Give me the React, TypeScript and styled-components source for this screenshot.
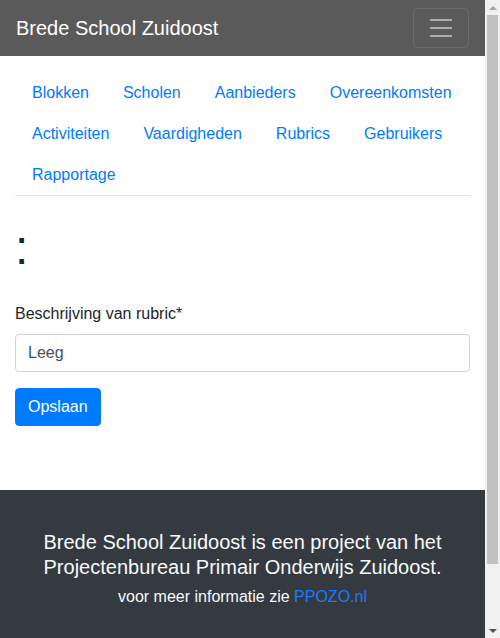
import React, { useState } from 'react';
import styled, { createGlobalStyle } from 'styled-components';

const GlobalStyle = createGlobalStyle`
  * { box-sizing: border-box; }
  html, body {
    margin: 0;
    padding: 0;
  }
  body {
    font-family: "Liberation Sans", Arial, sans-serif;
    font-size: 16px;
    line-height: 1.5;
    color: #212529;
    background: #fff;
  }
`;

// page content leaves room for the window scrollbar on the right
const Page = styled.div`
  margin-right: 15px;
`;

// drawn scrollbar, lies over the right edge of the window
const ScrollRail = styled.div`
  position: fixed;
  top: 0;
  right: 0;
  width: 15px;
  height: 100vh;
  background: #f1f1f1;
  display: flex;
  flex-direction: column;
  align-items: center;
`;

const ScrollArrow = styled.div<{ $down?: boolean; $muted?: boolean }>`
  width: 15px;
  height: 15px;
  display: flex;
  align-items: center;
  justify-content: center;

  &::before {
    content: '';
    border-left: 4px solid transparent;
    border-right: 4px solid transparent;
    ${({ $down, $muted }) =>
      $down
        ? `border-top: 4px solid ${$muted ? '#a3a3a3' : '#505050'};`
        : `border-bottom: 4px solid ${$muted ? '#a3a3a3' : '#505050'};`}
  }
`;

const ScrollTrack = styled.div`
  flex: 1;
  width: 100%;
  padding: 0 2px;
`;

const ScrollThumb = styled.div`
  height: 549px;
  background: #c1c1c1;
`;

const Navbar = styled.nav`
  height: 56px;
  background: #5a5a5a;
  padding: 8px 16px;
  display: flex;
  align-items: center;
  justify-content: space-between;
`;

const Brand = styled.a`
  color: #fff;
  font-size: 20px;
  line-height: 30px;
  text-decoration: none;
`;

const Toggler = styled.button`
  width: 56px;
  height: 40px;
  padding: 4px 12px;
  background: transparent;
  border: 1px solid rgba(255, 255, 255, 0.1);
  border-radius: 4px;
  display: flex;
  align-items: center;
  justify-content: center;
  cursor: pointer;
`;

const Container = styled.main`
  padding: 16px 15px 0;
`;

const Tabs = styled.ul`
  list-style: none;
  margin: 0;
  padding: 0;
  display: flex;
  flex-wrap: wrap;
  border-bottom: 1px solid #dee2e6;
`;

const TabItem = styled.li`
  margin-bottom: -1px;
`;

const TabLink = styled.a`
  display: block;
  padding: 8px 16px;
  border: 1px solid transparent;
  color: #007bff;
  text-decoration: none;
  line-height: 24px;
`;

const Title = styled.h1`
  font-size: 48px;
  font-weight: 500;
  line-height: 1.2;
  margin: 23px 0 25px;
`;

const FormGroup = styled.div`
  margin-bottom: 16px;
`;

const Label = styled.label`
  display: block;
  margin-bottom: 8px;
`;

const TextInput = styled.input`
  display: block;
  width: 100%;
  height: 38px;
  padding: 6px 12px;
  font-family: inherit;
  font-size: 16px;
  line-height: 24px;
  color: #495057;
  border: 1px solid #ced4da;
  border-radius: 4px;
  outline: none;
`;

const SaveButton = styled.button`
  height: 38px;
  padding: 6px 12px;
  font-family: inherit;
  font-size: 16px;
  line-height: 24px;
  color: #fff;
  background: #007bff;
  border: 1px solid #007bff;
  border-radius: 4px;
  margin-bottom: 64px;
  cursor: pointer;
`;

const Footer = styled.footer`
  background: #343a40;
  color: #f8f9fa;
  text-align: center;
  padding: 40px 15px 97px;
`;

const FooterLead = styled.p`
  font-size: 20px;
  line-height: 25px;
  margin: 0 0 5px;
`;

const FooterNote = styled.p`
  margin: 0;
  line-height: 24px;

  a {
    color: #1a7cf5;
    text-decoration: none;
  }
`;

const links = [
  'Blokken',
  'Scholen',
  'Aanbieders',
  'Overeenkomsten',
  'Activiteiten',
  'Vaardigheden',
  'Rubrics',
  'Gebruikers',
  'Rapportage',
];

export default function App() {
  const [description, setDescription] = useState('Leeg');

  return (
    <>
      <GlobalStyle />
      <Page>
        <Navbar>
          <Brand href="#">Brede School Zuidoost</Brand>
          <Toggler aria-label="Toggle navigation">
            <svg width="30" height="30" viewBox="0 0 30 30">
              <path
                stroke="rgba(255,255,255,0.5)"
                strokeWidth="2"
                strokeLinecap="butt"
                d="M4 7h22M4 15h22M4 23h22"
              />
            </svg>
          </Toggler>
        </Navbar>
        <Container>
          <Tabs>
            {links.map((link) => (
              <TabItem key={link}>
                <TabLink href="#">{link}</TabLink>
              </TabItem>
            ))}
          </Tabs>
          <Title>:</Title>
          <form onSubmit={(e) => e.preventDefault()}>
            <FormGroup>
              <Label htmlFor="beschrijving">Beschrijving van rubric*</Label>
              <TextInput
                id="beschrijving"
                value={description}
                onChange={(e) => setDescription(e.target.value)}
              />
            </FormGroup>
            <SaveButton type="submit">Opslaan</SaveButton>
          </form>
        </Container>
        <Footer>
          <FooterLead>
            Brede School Zuidoost is een project van het Projectenbureau Primair Onderwijs Zuidoost.
          </FooterLead>
          <FooterNote>
            voor meer informatie zie <a href="#">PPOZO.nl</a>
          </FooterNote>
        </Footer>
      </Page>
      <ScrollRail aria-hidden>
        <ScrollArrow $muted />
        <ScrollTrack>
          <ScrollThumb />
        </ScrollTrack>
        <ScrollArrow $down />
      </ScrollRail>
    </>
  );
}
